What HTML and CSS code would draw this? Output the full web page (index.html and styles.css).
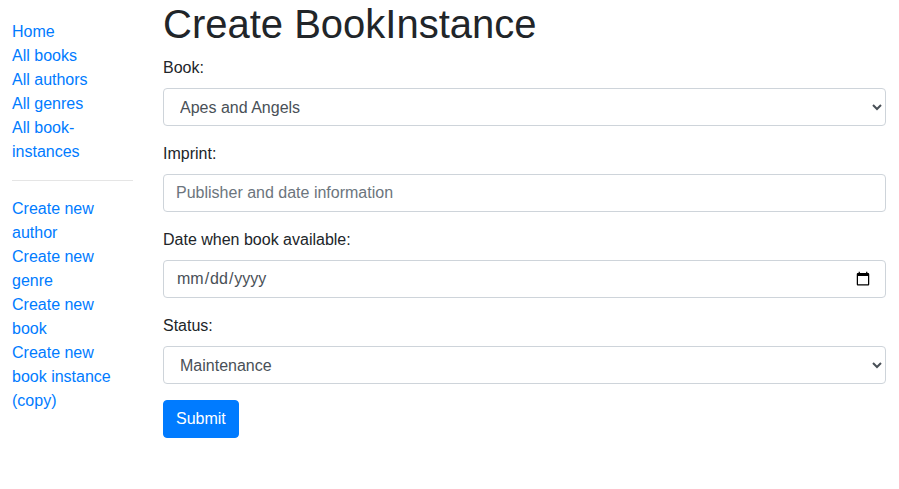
FILE: index.html
```html
<!DOCTYPE html>
<html lang="en">
<head>
<meta charset="utf-8">
<title>Create BookInstance</title>
<link rel="stylesheet" href="styles.css">
</head>
<body>
<div class="page">
  <aside class="sidebar">
    <ul class="sidebar-nav">
      <li><a href="#">Home</a></li>
      <li><a href="#">All books</a></li>
      <li><a href="#">All authors</a></li>
      <li><a href="#">All genres</a></li>
      <li><a href="#">All book-instances</a></li>
    </ul>
    <hr class="divider">
    <ul class="sidebar-nav sidebar-nav-second">
      <li><a href="#">Create new author</a></li>
      <li><a href="#">Create new genre</a></li>
      <li><a href="#">Create new book</a></li>
      <li><a href="#">Create new book instance (copy)</a></li>
    </ul>
  </aside>
  <main class="content">
    <h1 class="title">Create BookInstance</h1>
    <form class="form">
      <div class="form-group">
        <label class="label" for="book">Book:</label>
        <select id="book" class="control control-select">
          <option>Apes and Angels</option>
        </select>
      </div>
      <div class="form-group">
        <label class="label" for="imprint">Imprint:</label>
        <input id="imprint" class="control" type="text" placeholder="Publisher and date information">
      </div>
      <div class="form-group">
        <label class="label" for="due">Date when book available:</label>
        <input id="due" class="control" type="date">
      </div>
      <div class="form-group">
        <label class="label" for="status">Status:</label>
        <select id="status" class="control control-select">
          <option>Maintenance</option>
        </select>
      </div>
      <button class="btn" type="submit">Submit</button>
    </form>
  </main>
</div>
</body>
</html>
```
FILE: styles.css
```css
* { box-sizing: border-box; }
html, body { margin: 0; padding: 0; }
body {
  font-family: "Liberation Sans", Arial, sans-serif;
  font-size: 16px;
  line-height: 1.5;
  color: #212529;
  background: #fff;
}
.page {
  display: flex;
  padding: 0 13px 0 12px;
  gap: 30.5px;
}
.sidebar {
  width: 120.5px;
  flex: 0 0 120.5px;
}
.sidebar-nav {
  list-style: none;
  margin: 20px 0 16px 0;
  padding: 0;
}
.sidebar-nav-second { margin-top: 0; }
.sidebar-nav a {
  color: #007bff;
  text-decoration: none;
}
.divider {
  margin: 16px 0;
  border: 0;
  border-top: 1px solid rgba(0,0,0,.1);
  height: 0;
}
.content {
  flex: 1 1 auto;
  min-width: 0;
}
.title {
  margin: 0 0 8px 0;
  font-size: 40px;
  font-weight: 500;
  line-height: 1.2;
}
.form { margin: 0; }
.form-group { margin-bottom: 16px; }
.label {
  display: inline-block;
  margin-bottom: 8px;
}
.control {
  display: block;
  width: 100%;
  height: 38px;
  padding: 6px 12px;
  font-family: inherit;
  font-size: 16px;
  line-height: 1.5;
  color: #495057;
  background: #fff;
  border: 1px solid #ced4da;
  border-radius: 4px;
  margin: 0;
}
.control::placeholder { color: #6c757d; opacity: 1; }
.btn {
  display: inline-block;
  font-family: inherit;
  font-size: 16px;
  line-height: 1.5;
  padding: 6px 12px;
  color: #fff;
  background: #007bff;
  border: 1px solid #007bff;
  border-radius: 4px;
  cursor: pointer;
}
```
